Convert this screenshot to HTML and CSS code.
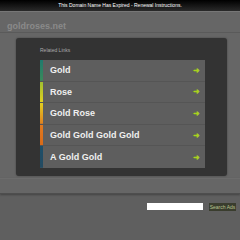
FILE: index.html
```html
<!DOCTYPE html>
<html lang="en">
<head>
<meta charset="UTF-8">
<meta name="viewport" content="width=device-width, initial-scale=1.0">
<title>goldroses.net</title>
<link rel="stylesheet" href="styles.css">
</head>
<body>
<div class="topbar">This Domain Name Has Expired - Renewal Instructions.</div>
<div class="header">
<h1>goldroses.net</h1>
</div>
<div class="content">
<div class="panel">
<h3>Related Links</h3>
<ul class="links">
<li class="c1"><span>Gold</span><i>&#10140;</i></li>
<li class="c2"><span>Rose</span><i>&#10140;</i></li>
<li class="c3"><span>Gold Rose</span><i>&#10140;</i></li>
<li class="c4"><span>Gold Gold Gold Gold</span><i>&#10140;</i></li>
<li class="c5"><span>A Gold Gold</span><i>&#10140;</i></li>
</ul>
</div>
</div>
<div class="band"></div>
<div class="footer">
<div class="search">
<input type="text">
<button>Search Ads</button>
</div>
</div>
</body>
</html>
```

FILE: styles.css
```css
body {
    margin: 0;
    font-family: 'Liberation Sans', Arial, sans-serif;
    background-color: #5f5f5f;
    color: #eee;
}
.topbar {
    height: 11px;
    line-height: 11px;
    font-size: 5px;
    text-align: center;
    color: #fff;
    background: linear-gradient(#000, #2a2a2a);
    border-bottom: 1px solid #777;
}
.header {
    background-color: #666;
    height: 20px;
    padding-left: 7px;
    border-bottom: 1px solid #5a5a5a;
}
h1 {
    margin: 0;
    padding-top: 10px;
    font-size: 9px;
    line-height: 8px;
    color: #8a8a8a;
}
.content {
    background-color: #666;
    padding: 5px 13px 2px 16px;
}
.panel {
    background-color: #333;
    border-radius: 3px;
    padding: 8px 22px 8px 24px;
    box-shadow: 0 0 2px rgba(0,0,0,0.4);
}
h3 {
    margin: 0 0 6px 0;
    font-size: 5px;
    line-height: 8px;
    font-weight: normal;
    color: #aaa;
}
.links {
    list-style: none;
    margin: 0;
    padding: 0;
}
.links li {
    display: flex;
    align-items: center;
    justify-content: space-between;
    box-sizing: border-box;
    height: 21.6px;
    padding: 0 5px 0 10px;
    background-color: #5e5e5e;
    border-bottom: 1px solid #555;
    font-size: 9px;
    font-weight: bold;
    color: #f0f0f0;
}
.links li:last-child {
    border-bottom: none;
}
.links i {
    font-style: normal;
    font-size: 8px;
    font-weight: bold;
    color: #a8d020;
}
.links .c1 { background: linear-gradient(#1f7a6e, #3a8a5a) left / 3px 100% no-repeat, #5e5e5e; }
.links .c2 { background: linear-gradient(#a0c030, #e0d020) left / 3px 100% no-repeat, #5e5e5e; }
.links .c3 { background: linear-gradient(#e0d020, #e08020) left / 3px 100% no-repeat, #5e5e5e; }
.links .c4 { background: linear-gradient(#e07a20, #d86a18) left / 3px 100% no-repeat, #5e5e5e; }
.links .c5 { background: linear-gradient(#1d4f6a, #244a60) left / 3px 100% no-repeat, #5e5e5e; }
.band {
    height: 14px;
    background-color: #666;
    border-top: 1px solid #6c6c6c;
    border-bottom: 1px solid #4e4e4e;
    box-shadow: 0 1px 2px rgba(0,0,0,0.3);
}
.footer {
    padding: 9px 4px 0 0;
}
.search {
    display: flex;
    justify-content: flex-end;
    align-items: center;
    gap: 6px;
}
.search input {
    width: 56px;
    height: 7px;
    padding: 0;
    border: none;
    background: #fff;
}
.search button {
    width: 27px;
    height: 8px;
    padding: 0;
    border: none;
    font-family: 'Liberation Sans', Arial, sans-serif;
    font-size: 5px;
    line-height: 8px;
    background-color: #3a3d2e;
    color: #b8c490;
}
```
